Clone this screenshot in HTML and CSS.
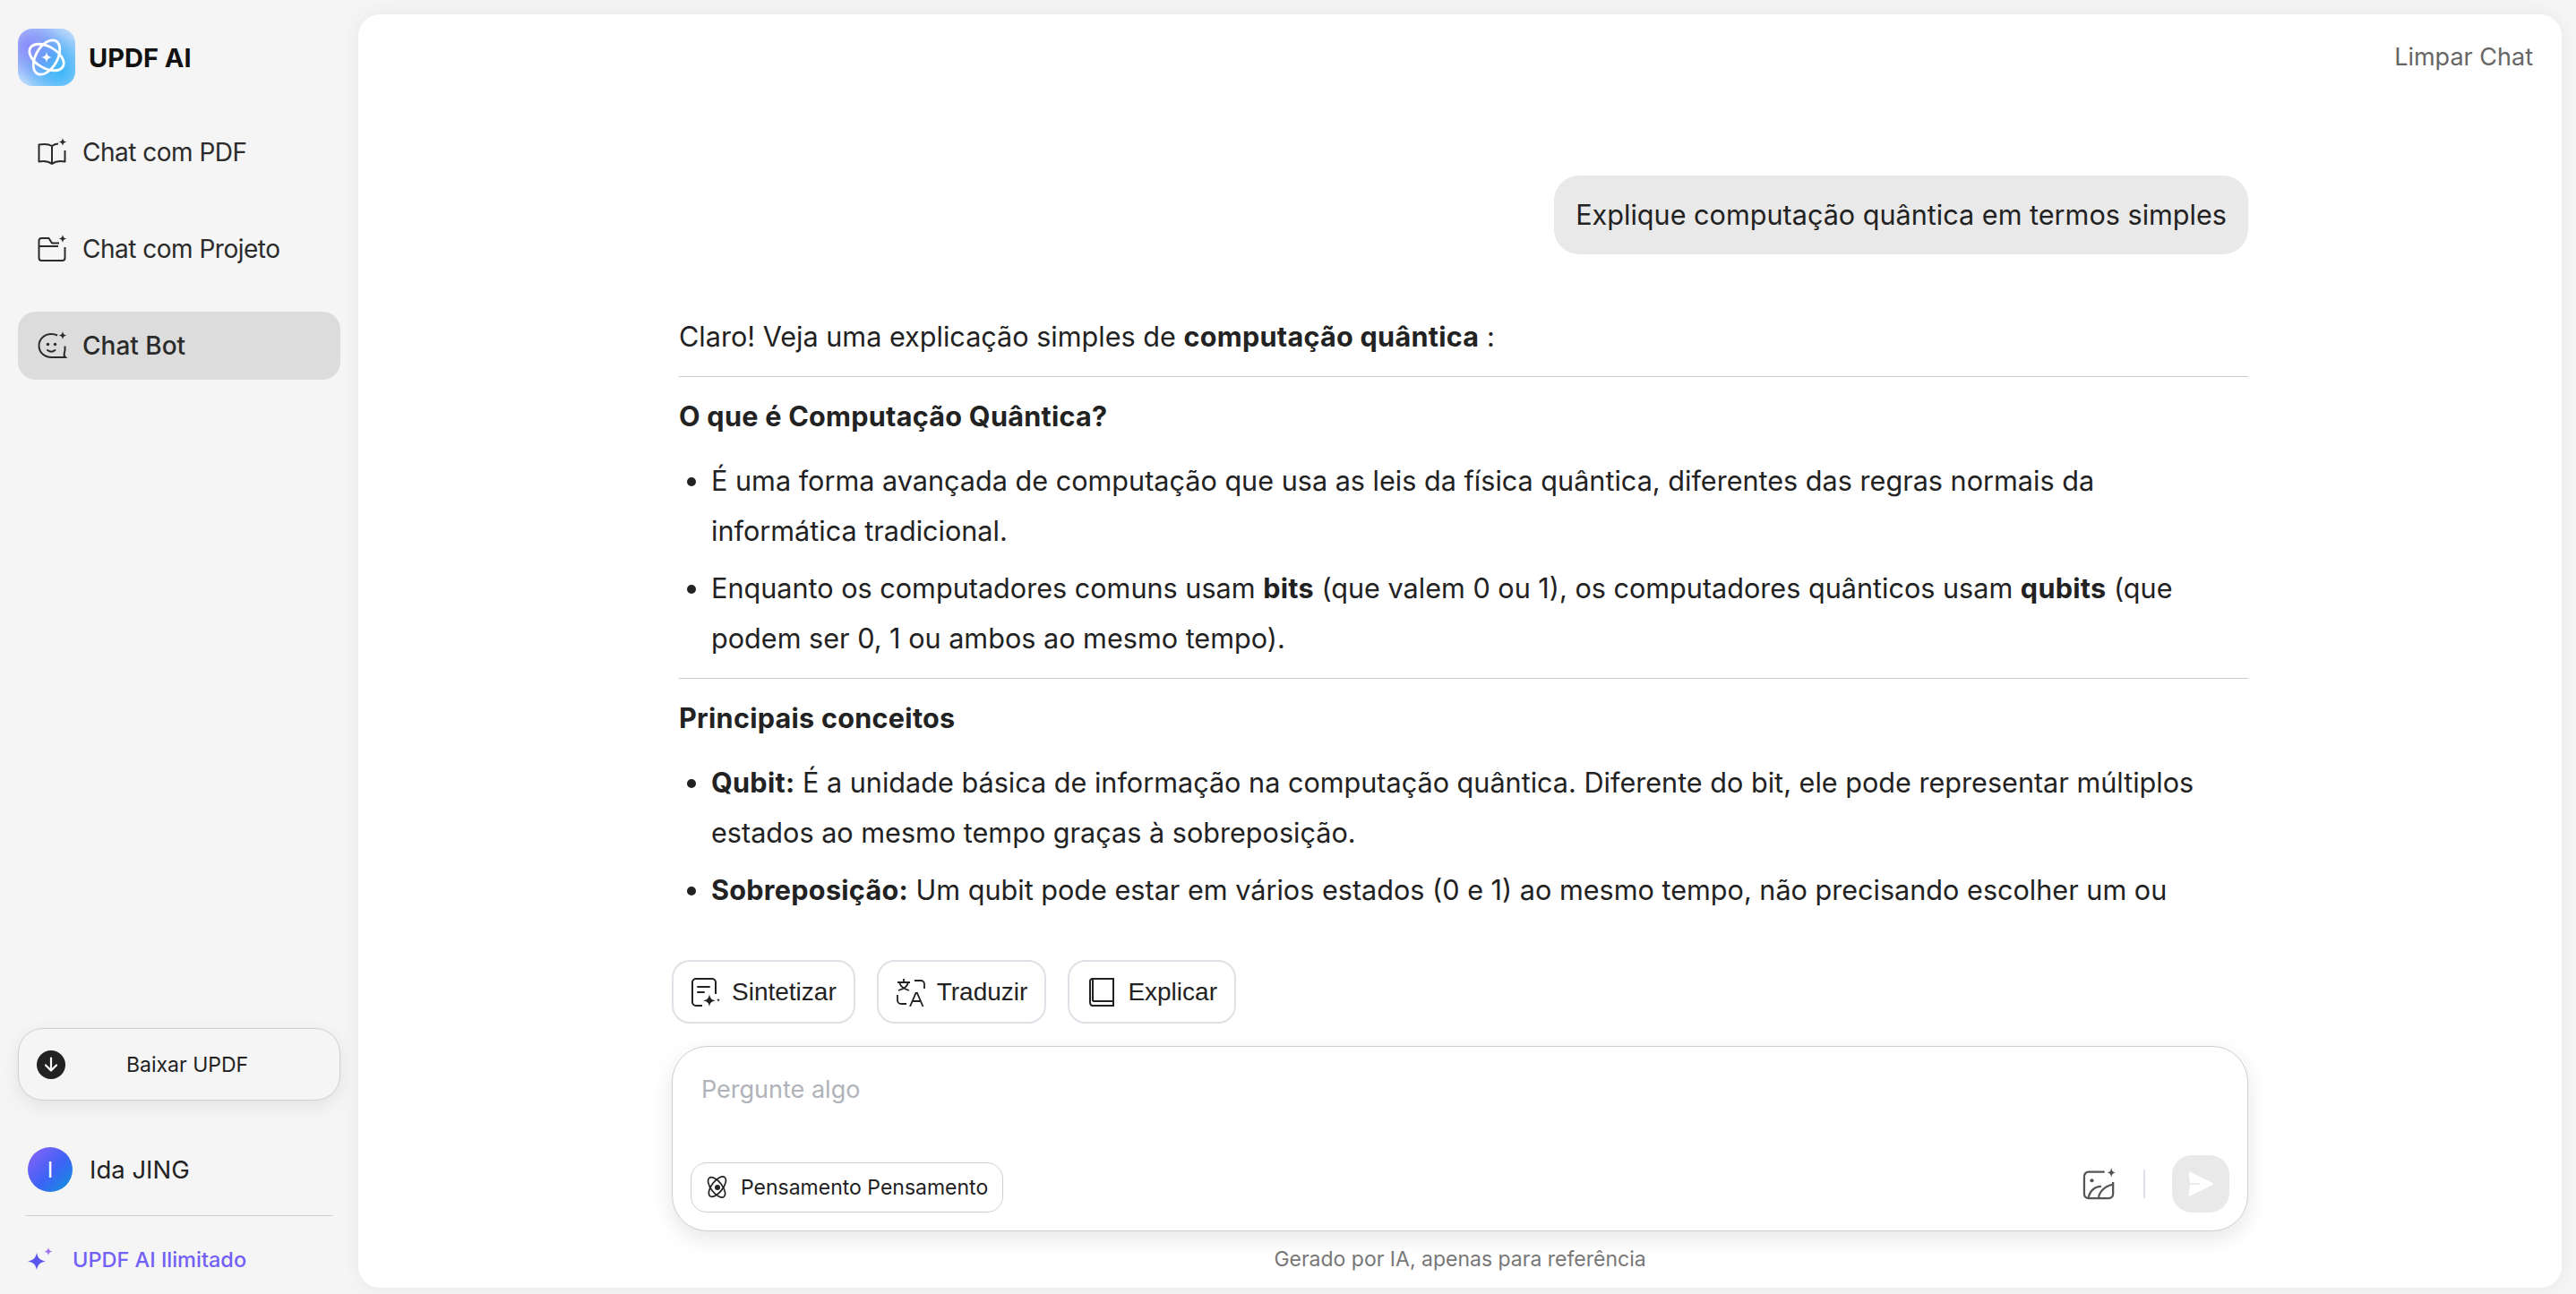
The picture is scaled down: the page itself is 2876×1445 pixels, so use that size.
FILE: index.html
```html
<!DOCTYPE html>
<html lang="pt">
<head>
    <meta charset="UTF-8">
    <meta name="viewport" content="width=device-width, initial-scale=1.0">
    <title>UPDF AI</title>
    <link rel="stylesheet" href="styles.css">
</head>
<body>
    <div class="app">

        <!-- Sidebar -->
        <aside class="sidebar">
            <div class="brand">
                <div class="brand-logo">
                    <svg width="64" height="64" viewBox="0 0 64 64" fill="none">
                        <g stroke="#fff" stroke-width="2.800">
                            <ellipse cx="32" cy="32" rx="21" ry="12" transform="rotate(30 32 32)"/>
                            <ellipse cx="32" cy="32" rx="21" ry="12" transform="rotate(-60 32 32)"/>
                        </g>
                        <path d="M32 26c.7 3.800 2.200 5.300 6 6-3.800.7-5.300 2.200-6 6-.7-3.800-2.200-5.300-6-6 3.800-.7 5.300-2.200 6-6z" fill="#fff"/>
                    </svg>
                </div>
                <span class="brand-name">UPDF AI</span>
            </div>

            <nav class="nav">
                <a class="nav-item">
                    <svg class="nav-icon" viewBox="0 0 34 34" fill="none" stroke="#2b2b2b" stroke-width="2" stroke-linejoin="round">
                        <path d="M16 10C12 7.500 7 7.500 1.500 8.500v19c5.500-1 10.500-.5 14.500 2.500 4-3 9-3.500 14.500-2.500V15"/>
                        <path d="M16 10v20M23 7.500c-2.500.2-5 1-7 2.500"/>
                        <path d="M28 1c.6 3 1.500 4 4.500 4.500-3 .6-3.900 1.500-4.500 4.500-.6-3-1.500-3.900-4.500-4.500 3-.5 3.900-1.500 4.500-4.500z" fill="#2b2b2b" stroke="none"/>
                    </svg>
                    <span>Chat com PDF</span>
                </a>
                <a class="nav-item">
                    <svg class="nav-icon" viewBox="0 0 34 34" fill="none" stroke="#2b2b2b" stroke-width="2" stroke-linejoin="round">
                        <path d="M24 10.500H16L12.500 5H4a2.500 2.500 0 0 0-2.500 2.500V27a3 3 0 0 0 3 3h23a3 3 0 0 0 3-3V15"/>
                        <path d="M1.500 14H23"/>
                        <path d="M28 1c.6 3 1.500 4 4.500 4.500-3 .6-3.900 1.500-4.500 4.500-.6-3-1.500-3.900-4.500-4.500 3-.5 3.900-1.500 4.500-4.500z" fill="#2b2b2b" stroke="none"/>
                    </svg>
                    <span>Chat com Projeto</span>
                </a>
                <a class="nav-item active">
                    <svg class="nav-icon" viewBox="0 0 34 34" fill="none" stroke="#2b2b2b" stroke-width="2">
                        <path d="M22 5.500C20 4.500 18 4 15.500 4 7.500 4 1.500 9.500 1.500 17s6 13 14 13H31c-1.500-1.500-1.700-3-1.200-4.500 .7-2 1-4.500.7-8"/>
                        <path d="M11 22c2.500 2 6 2 8.500 0" stroke-linecap="round"/>
                        <circle cx="11.500" cy="15.500" r="1.700" fill="#2b2b2b" stroke="none"/>
                        <circle cx="19.500" cy="15.500" r="1.700" fill="#2b2b2b" stroke="none"/>
                        <path d="M28 1c.6 3 1.500 4 4.500 4.500-3 .6-3.900 1.500-4.500 4.500-.6-3-1.500-3.900-4.500-4.500 3-.5 3.900-1.500 4.500-4.500z" fill="#2b2b2b" stroke="none"/>
                    </svg>
                    <span>Chat Bot</span>
                </a>
            </nav>

            <div class="sidebar-bottom">
                <button class="download-btn">
                    <svg width="32" height="32" viewBox="0 0 32 32" fill="none">
                        <circle cx="16" cy="16" r="16" fill="#222"/>
                        <path d="M16 8.500v14M10 16.500l6 6 6-6" stroke="#fff" stroke-width="2.200" stroke-linecap="round" stroke-linejoin="round"/>
                    </svg>
                    <span>Baixar UPDF</span>
                </button>
                <div class="user">
                    <div class="avatar">I</div>
                    <span class="user-name">Ida JING</span>
                </div>
                <a class="upgrade">
                    <svg width="30" height="26" viewBox="0 0 30 26">
                        <path d="M11 6c1.300 6 3.500 8.200 10 9.500-6.500 1.300-8.700 3.500-10 9.500-1.300-6-3.500-8.200-10-9.500C7.500 14.200 9.700 12 11 6z" fill="#5b56ee"/>
                        <path d="M24 0c.6 3 1.600 4 4.500 4.500-2.900.5-3.900 1.500-4.500 4.500-.6-3-1.600-4-4.500-4.500C22.400 4 23.400 3 24 0z" fill="#a06bf5"/>
                    </svg>
                    <span>UPDF AI Ilimitado</span>
                </a>
            </div>
        </aside>

        <!-- Main chat panel -->
        <main class="panel">
            <div class="panel-head">
                <a class="clear-chat">Limpar Chat</a>
            </div>

            <div class="chat">
                <div class="bubble-row">
                    <div class="bubble">Explique computação quântica em termos simples</div>
                </div>
                <div class="answer">
                    <p>Claro! Veja uma explicação simples de <strong>computação quântica</strong> :</p>
                    <hr>
                    <h3>O que é Computação Quântica?</h3>
                    <ul>
                        <li>É uma forma avançada de computação que usa as leis da física quântica, diferentes das regras normais da informática tradicional.</li>
                        <li>Enquanto os computadores comuns usam <strong>bits</strong> (que valem 0 ou 1), os computadores quânticos usam <strong>qubits</strong> (que podem ser 0, 1 ou ambos ao mesmo tempo).</li>
                    </ul>
                    <hr>
                    <h3>Principais conceitos</h3>
                    <ul>
                        <li><strong>Qubit:</strong> É a unidade básica de informação na computação quântica. Diferente do bit, ele pode representar múltiplos estados ao mesmo tempo graças à sobreposição.</li>
                        <li><strong>Sobreposição:</strong> Um qubit pode estar em vários estados (0 e 1) ao mesmo tempo, não precisando escolher um ou outro.</li>
                    </ul>
                </div>
            </div>

            <div class="composer">
                <div class="chips">
                    <button class="chip">
                        <svg class="chip-icon" viewBox="0 0 32 32" fill="none" stroke="#222" stroke-width="2">
                            <path d="M12 31H5a4 4 0 0 1-4-4V5a4 4 0 0 1 4-4h18a4 4 0 0 1 4 4v13"/>
                            <path d="M7 10h13M7 16h7" stroke-linecap="round"/>
                            <path d="M20 18c.8 5 2.200 6.300 7 7.500-4.800.9-6.200 2.200-7 6.500-.8-4.300-2.200-5.600-7-6.500 4.800-1.200 6.200-2.500 7-7.500z" fill="#222" stroke="none"/>
                            <path d="M30 22.500c.3 1.500.6 1.900 2 2.200-1.400.3-1.700.7-2 2.200-.3-1.500-.6-1.900-2-2.200 1.400-.3 1.700-.7 2-2.200z" fill="#222" stroke="none"/>
                        </svg>
                        <span>Sintetizar</span>
                    </button>
                    <button class="chip">
                        <svg class="chip-icon" viewBox="0 0 32 32" fill="none" stroke="#222" stroke-width="1.800">
                            <path d="M1 5h14M8 1v4M13 5c-1 4-5 7.500-11 9M3.500 6c1 3.500 5 6.500 10.500 8"/>
                            <path d="M20 3h7a4 4 0 0 1 4 4v5M1 19v6a4 4 0 0 0 4 4h6"/>
                            <path d="M15 32l6.500-15h1.500l6.500 15M17.500 26h9.500"/>
                        </svg>
                        <span>Traduzir</span>
                    </button>
                    <button class="chip">
                        <svg class="chip-icon book-icon" viewBox="0 0 28 32" fill="none" stroke="#222" stroke-width="2">
                            <path d="M1 27V3.500A2.500 2.500 0 0 1 3.500 1H27v25H4"/>
                            <path d="M4 1v25M1 27c0 2.500 1.200 4 3 4h23v-5"/>
                        </svg>
                        <span>Explicar</span>
                    </button>
                </div>

                <div class="input-card">
                    <div class="placeholder">Pergunte algo</div>
                    <div class="input-tools">
                        <button class="think-btn">
                            <svg width="26" height="26" viewBox="0 0 26 26" fill="none" stroke="#222" stroke-width="1.800">
                                <ellipse cx="13" cy="13" rx="6.500" ry="14" transform="rotate(-38 13 13) scale(.95)"/>
                                <ellipse cx="13" cy="13" rx="6.500" ry="14" transform="rotate(38 13 13) scale(.95)"/>
                                <circle cx="13" cy="13" r="3" fill="#222" stroke="none"/>
                            </svg>
                            <span>Pensamento Pensamento</span>
                        </button>
                        <div class="tools-right">
                            <svg width="38" height="36" viewBox="0 0 40 38" fill="none" stroke="#555" stroke-width="2.400">
                                <path d="M26 5H7a5 5 0 0 0-5 5v21a5 5 0 0 0 5 5h24a5 5 0 0 0 5-5V17"/>
                                <path d="M7 36c1-8 7-14 15-14M19 36c0-7 7-14 16-16"/>
                                <circle cx="11" cy="15" r="2.200" fill="#555" stroke="none"/>
                                <path d="M34 0c.7 4 1.800 5 5 5.700-3.200.7-4.300 1.800-5 5.300-.7-3.500-1.800-4.600-5-5.300 3.200-.7 4.300-1.700 5-5.700z" fill="#555" stroke="none"/>
                            </svg>
                            <div class="tools-sep"></div>
                            <button class="send-btn">
                                <svg width="28" height="28" viewBox="0 0 28 28">
                                    <path d="M2 .5l25 12.300a1.300 1.300 0 0 1 0 2.400L2 27.500c-1 .4-1.500-.2-1.300-1.200L2 15h11v-2H2L.7 1.700C.5.700 1 .1 2 .5z" fill="#fff"/>
                                </svg>
                            </button>
                        </div>
                    </div>
                </div>

                <div class="disclaimer">Gerado por IA, apenas para referência</div>
            </div>
        </main>
    </div>
</body>
</html>
```

FILE: styles.css
```css
* {
    box-sizing: border-box;
}

body {
    margin: 0;
    padding: 0;
    background-color: #f5f5f5;
    font-family: Inter, "Noto Sans", sans-serif;
    color: #222222;
    overflow: hidden;
}

button {
    font-family: inherit;
    cursor: pointer;
}

.app {
    display: flex;
    height: 1445px;
}

/* Sidebar */
.sidebar {
    width: 400px;
    flex: none;
    display: flex;
    flex-direction: column;
    padding: 32px 20px 9px;
}

.brand {
    display: flex;
    align-items: center;
    gap: 15px;
    height: 64px;
}

.brand-logo {
    width: 64px;
    height: 64px;
    border-radius: 16px;
    background:
        radial-gradient(circle at 18% 30%, #8a8cf8 0%, rgba(138, 140, 248, 0) 55%),
        radial-gradient(circle at 75% 75%, #3fb8f8 0%, rgba(63, 184, 248, 0) 60%),
        radial-gradient(circle at 50% 50%, #4a9cf9 0%, #b9d8fb 85%);
}

.brand-logo svg {
    display: block;
}

.brand-name {
    font-size: 29px;
    font-weight: 700;
    color: #111111;
}

.nav {
    display: flex;
    flex-direction: column;
    gap: 32px;
    margin-top: 36px;
}

.nav-item {
    display: flex;
    align-items: center;
    gap: 16px;
    height: 76px;
    padding: 0 22px;
    border-radius: 20px;
    font-size: 28px;
    letter-spacing: -0.5px;
    color: #2b2b2b;
}

.nav-item.active {
    background-color: #dcdcdc;
    font-weight: 500;
    letter-spacing: 0;
}

.nav-icon {
    width: 34px;
    height: 34px;
    flex: none;
}

.sidebar-bottom {
    margin-top: auto;
    display: flex;
    flex-direction: column;
}

.download-btn {
    display: flex;
    align-items: center;
    width: 360px;
    height: 81px;
    padding: 0 20px;
    background-color: #f5f5f5;
    border: 1px solid #cfcfcf;
    border-radius: 28px;
    box-shadow: 0 6px 20px rgba(0, 0, 0, 0.08);
    font-size: 23px;
    color: #222222;
}

.download-btn span {
    margin-left: 68px;
}

.user {
    display: flex;
    align-items: center;
    gap: 19px;
    height: 50px;
    margin: 52px 0 0 11px;
}

.avatar {
    width: 50px;
    height: 50px;
    border-radius: 50%;
    background: linear-gradient(135deg, #8e62f7 0%, #3d63f5 55%, #0a97da 100%);
    display: flex;
    align-items: center;
    justify-content: center;
    color: #ffffff;
    font-size: 24px;
}

.user-name {
    font-size: 27.500px;
}

.upgrade {
    display: flex;
    align-items: center;
    gap: 21px;
    margin: 26px 8px 0;
    padding: 33px 0 15px 2px;
    border-top: 1px solid #cfcfcf;
    font-size: 23.500px;
    font-weight: 500;
    color: #7360f5;
    height: 79px;
}

/* Main panel */
.panel {
    width: 2460px;
    height: 1422px;
    margin-top: 16px;
    display: flex;
    flex-direction: column;
    background-color: #ffffff;
    border-radius: 24px;
    box-shadow: 0 0 20px rgba(0, 0, 0, 0.06);
    overflow: hidden;
}

.panel-head {
    display: flex;
    justify-content: flex-end;
    flex: none;
    height: 180px;
    padding: 30px 32px 0 0;
}

.clear-chat {
    font-size: 27px;
    line-height: 36px;
    color: #666666;
}

.chat {
    flex: 1;
    min-height: 0;
    overflow: hidden;
    width: 1752px;
    margin-left: 358px;
    font-size: 30.600px;
    line-height: 56px;
    color: #222222;
}

.bubble-row {
    display: flex;
    justify-content: flex-end;
}

.bubble {
    padding: 16px 24px;
    background-color: #e9e9e9;
    border-radius: 28px;
}

.answer {
    margin-top: 64px;
}

.answer p {
    margin: 0;
}

.answer hr {
    margin: 16px 0;
    border: none;
    border-top: 1px solid #cccccc;
}

.answer h3 {
    margin: 0 0 16px;
    font-size: 30.600px;
    font-weight: 700;
    letter-spacing: 0.26px;
}

.answer ul {
    margin: 0;
    padding: 0 6px 0 36px;
}

.answer li {
    margin-bottom: 8px;
}

.answer li:last-child {
    margin-bottom: 0;
}

.answer strong {
    font-weight: 700;
    letter-spacing: 0.26px;
}

/* Composer */
.composer {
    flex: none;
    width: 1760px;
    margin: 32px 0 0 350px;
    padding-bottom: 16px;
}

.chips {
    display: flex;
    gap: 24px;
    height: 71px;
}

.chip {
    display: flex;
    align-items: center;
    gap: 13px;
    height: 71px;
    padding: 0 19px 0 20px;
    background-color: #ffffff;
    border: 2px solid #dfe1e6;
    border-radius: 20px;
    font-family: "Liberation Sans", Arial, sans-serif;
    font-size: 28px;
    color: #222222;
}

.chip-icon {
    width: 32px;
    height: 32px;
    flex: none;
}

.book-icon {
    width: 28px;
    margin: 0 2px;
}

.input-card {
    display: flex;
    flex-direction: column;
    justify-content: space-between;
    height: 207px;
    margin-top: 25px;
    padding: 30px 20px 20px;
    background-color: #ffffff;
    border: 1px solid #cfcfd3;
    border-radius: 40px;
    box-shadow: 0 8px 24px rgba(0, 0, 0, 0.1);
}

.placeholder {
    padding-left: 12px;
    font-size: 27px;
    line-height: 36px;
    color: #b0b3ba;
}

.input-tools {
    display: flex;
    align-items: flex-end;
    justify-content: space-between;
}

.think-btn {
    display: flex;
    align-items: center;
    gap: 13px;
    height: 56px;
    padding: 0 16px;
    background-color: #ffffff;
    border: 1px solid #cfcfd3;
    border-radius: 18px;
    font-size: 23px;
    color: #222222;
}

.tools-right {
    display: flex;
    align-items: center;
}

.tools-sep {
    width: 2px;
    height: 32px;
    margin: 0 30px;
    background-color: #dde0e8;
}

.send-btn {
    display: flex;
    align-items: center;
    justify-content: center;
    width: 64px;
    height: 64px;
    padding: 0;
    background-color: #e9e9e9;
    border: none;
    border-radius: 22px;
}

.disclaimer {
    padding-top: 15px;
    font-size: 23px;
    line-height: 32px;
    text-align: center;
    color: #777777;
}
```
